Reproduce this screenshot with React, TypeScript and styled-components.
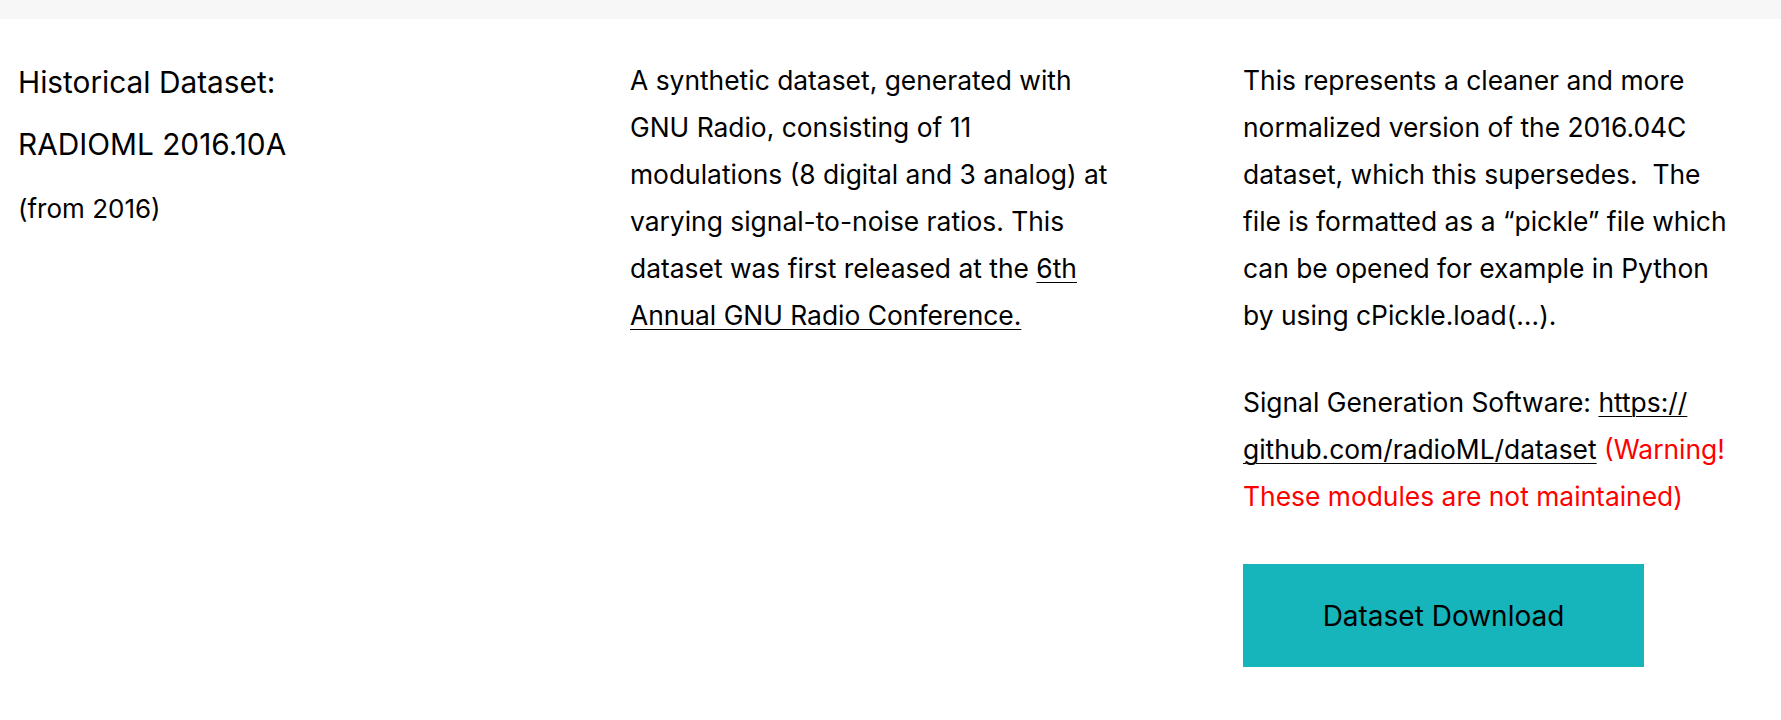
import styled, { createGlobalStyle } from 'styled-components';

const GlobalStyle = createGlobalStyle`
  html, body {
    margin: 0;
    padding: 0;
    background: #ffffff;
  }

  body {
    font-family: Inter, 'Open Sans', sans-serif;
    color: #000000;
    overflow: hidden;
  }
`;

function App() {
  return (
    <>
      <GlobalStyle />
      <TopBar />
      <DatasetSection>
        <Column>
          <DatasetTitle>
            Historical Dataset:
            <br />
            RADIOML 2016.10A
          </DatasetTitle>
          <DatasetYear>(from 2016)</DatasetYear>
        </Column>

        <Column>
          <Paragraph>
            A synthetic dataset, generated with GNU Radio, consisting of 11
            modulations (8 digital and 3 analog) at varying signal-to-noise
            ratios. This dataset was first released at the{' '}
            <TextLink href='#'>6th Annual GNU Radio Conference.</TextLink>
          </Paragraph>
        </Column>

        <Column>
          <Paragraph>
            This represents a cleaner and more normalized version of the
            2016.04C dataset, which this supersedes.&nbsp; The file is
            formatted as a “pickle” file which can be opened for example in
            Python by using cPickle.load(…).
          </Paragraph>
          <Paragraph $spaced>
            Signal Generation Software:{' '}
            <TextLink href='#'>
              https://
              <wbr />
              github.com/radioML/dataset
            </TextLink>{' '}
            <Warning>(Warning! These modules are not maintained)</Warning>
          </Paragraph>
          <DownloadButton href='#'>Dataset Download</DownloadButton>
        </Column>
      </DatasetSection>
    </>
  );
}

const TopBar = styled.div`
  height: 19px;
  background: #f7f7f7;
`;

const DatasetSection = styled.section`
  display: grid;
  grid-template-columns: 612px 613px 1fr;
  padding: 38px 0 0 18px;
`;

const Column = styled.div`
  display: flex;
  flex-direction: column;
  align-items: flex-start;
  max-width: 500px;
`;

const DatasetTitle = styled.h3`
  margin: -6px 0 0;
  font-size: 29.8px;
  font-weight: 400;
  line-height: 62px;
`;

const DatasetYear = styled.p`
  margin: 10px 0 0;
  font-size: 26px;
  line-height: 47px;
`;

const Paragraph = styled.p<{ $spaced?: boolean }>`
  margin: ${({ $spaced }) => ($spaced ? '40px 0 0' : '0')};
  font-size: 26.4px;
  line-height: 47px;
`;

const TextLink = styled.a`
  color: #000000;
  text-decoration: underline;
  text-underline-offset: 4px;
  text-decoration-thickness: 1px;
`;

const Warning = styled.span`
  color: #ff0000;
`;

const DownloadButton = styled.a`
  display: flex;
  align-items: center;
  justify-content: center;
  width: 401px;
  height: 103px;
  margin-top: 44px;
  background: #15b5bb;
  color: #000000;
  font-size: 28px;
  text-decoration: none;
`;

export default App;
